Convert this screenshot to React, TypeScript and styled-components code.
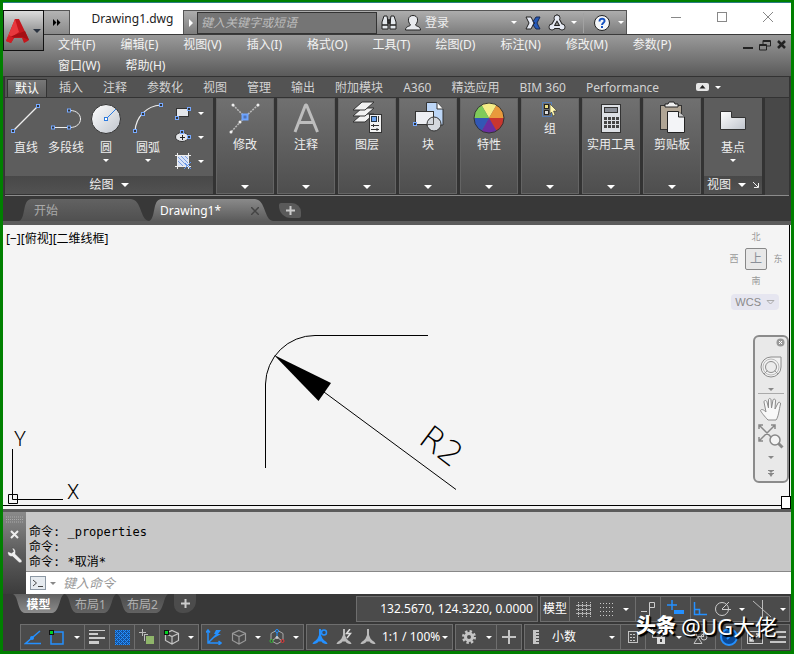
import React from 'react';
import styled, { createGlobalStyle, css } from 'styled-components';

const Global = createGlobalStyle`
  *, *::before, *::after { box-sizing: border-box; }
  html, body { margin: 0; padding: 0; background: #383838; }
  body, button, input, select {
    font-family: "Noto Sans", "Noto Sans CJK SC", sans-serif;
    font-size: 12px;
    line-height: 16px;
  }
  button, input, select {
    margin: 0; padding: 0; border: 0; background: none; color: inherit; border-radius: 0;
  }
  button, select { cursor: pointer; }
  svg { display: block; flex: none; }
`;

/* ---------- frame ---------- */
const Frame = styled.div`
  min-height: 100vh;
  display: flex;
  flex-direction: column;
  border: solid #008000;
  border-width: 2px 3px 3px;
  background: #383838;
  color: #eee;
  overflow: hidden;
`;

/* ---------- header ---------- */
const Header = styled.header`
  display: grid;
  grid-template-columns: 41px 1fr;
  grid-template-rows: 31px auto;
  border-top: 1px solid #2b7d86;
  background: linear-gradient(#fff 31px, #3a3a3a 31px, #3a3a3a 32px, #9a9a9a 32px, #7e7e7e 50px, #5a5a5a 100%);
`;
const AppButton = styled.button`
  grid-row: 1 / 3;
  margin-top: 7px;
  height: 41px;
  display: flex;
  align-items: center;
  justify-content: center;
  gap: 3px;
  border: 1px solid #111;
  background: linear-gradient(#dcdcdc, #9a9a9a 50%, #6b6b6b);
`;
const TitleRow = styled.div`
  display: flex;
  align-items: flex-end;
`;
const QuickAccess = styled.button`
  width: 26px;
  height: 24px;
  display: grid;
  place-items: center;
  border: solid #555;
  border-width: 1px 1px 0 0;
  background: linear-gradient(#b4b4b4, #8a8a8a);
`;
const Title = styled.h1`
  margin: 0;
  width: 113px;
  padding-left: 12px;
  align-self: center;
  text-align: center;
  font-size: 12px;
  font-weight: 400;
  line-height: 31px;
  height: 31px;
  color: #222;
`;
const InfoCenter = styled.div`
  height: 24px;
  display: flex;
  align-items: center;
  border: 1px solid #555;
  border-bottom: 0;
  background: linear-gradient(#adadad, #7c7c7c);
`;
const IconButton = styled.button<{ $w: number }>`
  width: ${p => p.$w}px;
  height: 100%;
  display: grid;
  place-items: center;
`;
const SearchInput = styled.input`
  width: 180px;
  height: 22px;
  padding-left: 3px;
  border: 1px solid #333;
  background: #757575;
  font-style: italic;
  &::placeholder { color: #bdbdbd; opacity: 1; }
`;
const SignIn = styled.button`
  width: 95px;
  height: 100%;
  display: flex;
  align-items: center;
  justify-content: space-between;
  padding-right: 3px;
`;
const Separator = styled.span`
  width: 1px;
  height: 20px;
  margin: 0 3px;
  background: #a2a2a2;
`;
const WindowButtons = styled.div`
  margin-left: auto;
  align-self: stretch;
  display: flex;
  color: #888;
`;
const WindowButton = styled.button`
  width: 46px;
  padding-bottom: 3px;
  display: grid;
  place-items: center;
`;
const MenuRow = styled.div`
  display: flex;
  justify-content: space-between;
`;
const MenuBar = styled.nav`
  display: flex;
  flex-wrap: wrap;
  column-gap: 25px;
  padding: 0 16px 0 14px;
  flex: 1;
`;
const MenuItem = styled.button`
  height: 21px;
  line-height: 21px;
  color: #f2f2f2;
`;
const DocControls = styled.div`
  display: flex;
  gap: 6px;
  height: 21px;
  align-items: center;
  padding-right: 5px;
  color: #222;
`;

/* ---------- ribbon ---------- */
const RibbonTabs = styled.nav`
  display: flex;
  height: 21px;
  margin: 0 1px;
  border: 1px solid #333;
  border-bottom: 0;
  background: #535353;
`;
const RibbonTab = styled.button<{ $active?: boolean }>`
  padding: 0 10px;
  line-height: 22px;
  color: #d2d2d2;
  ${p => p.$active && css`
    margin: 2px 2px 0 2px;
    padding: 0 7px;
    line-height: 17px;
    border: 1px solid #333;
    border-bottom: 0;
    background: linear-gradient(#777, #5e5e5e);
    color: #fff;
  `}
`;
const RibbonToggle = styled.button`
  display: flex;
  align-items: center;
  gap: 6px;
  padding-left: 27px;
`;
const Ribbon = styled.div`
  display: flex;
  gap: 3px;
  height: 99px;
  margin: 0 1px;
  padding: 0 0 2px;
  border: solid #333;
  border-width: 1px 1px 0;
  background: linear-gradient(90deg, #333 760px, #484848 760px);
  box-shadow: 0 -1px #8c8c8c inset;
`;
const Panel = styled.section<{ $w: number }>`
  width: ${p => p.$w}px;
  flex: none;
  display: flex;
  flex-direction: column;
  background: #5d5d5d;
`;
const PanelFooter = styled.button`
  height: 18px;
  margin-top: auto;
  display: flex;
  align-items: center;
  justify-content: center;
  gap: 7px;
  background: linear-gradient(#484848, #525252);
`;
const Tools = styled.div`
  display: grid;
  grid-template-columns: 42px 38px 42px 42px 1fr;
`;
const ToolButton = styled.button`
  height: 76px;
  padding-top: 4px;
  display: flex;
  flex-direction: column;
  align-items: center;
  white-space: nowrap;
  svg + span { margin-top: 6px; }
  span + svg { margin-top: 3px; }
`;
const SmallTools = styled.div`
  padding-top: 3px;
`;
const SmallTool = styled.button`
  height: 24px;
  display: flex;
  align-items: center;
  gap: 7px;
  padding-left: 6px;
`;
const CollapsedPanel = styled.button`
  width: 58px;
  flex: none;
  padding: 2px 0 4px;
  display: flex;
  flex-direction: column;
  align-items: center;
  white-space: nowrap;
  background: linear-gradient(#707070, #4e4e4e);
  border: 1px solid #646464;
  svg + span { margin-top: 2px; }
  svg:last-child { margin-top: auto; }
`;

/* ---------- drawing tabs ---------- */
const FileTabs = styled.nav`
  display: flex;
  align-items: flex-end;
  height: 29px;
  padding-left: 16px;
  border-bottom: 4px solid #5b5b5b;
  background: #383838;
`;
const FileTab = styled.button<{ $w: number; $active?: boolean }>`
  width: ${p => p.$w}px;
  height: 22px;
  display: flex;
  align-items: center;
  justify-content: space-between;
  padding: 2px 14px 0 ${p => (p.$active ? 11 : 15)}px;
  color: ${p => (p.$active ? '#fff' : '#aaa')};
  background: ${p => (p.$active ? 'linear-gradient(#8a8a8a, #5b5b5b)' : 'linear-gradient(#626262, #505050)')};
  clip-path: path('${p => `M0 22C7 20 3 1 12 0H${p.$w - 18}C${p.$w - 7} 1 ${p.$w - 9} 21 ${p.$w} 22Z`}');
`;
const AddTab = styled.button`
  width: 22px;
  height: 15px;
  margin: 0 0 3px 6px;
  display: grid;
  place-items: center;
  border-radius: 2px 9px 2px 12px;
  background: #5a5a5a;
`;

/* ---------- canvas ---------- */
const Canvas = styled.main`
  position: relative;
  flex: 1;
  min-height: 284px;
  background: #f4f4f4;
  color: #000;
`;
const ViewportBorder = styled.div`
  position: absolute;
  inset: 0 1px 3px 0;
  border: solid #000;
  border-width: 0 1px 1px 0;
`;
const ResizeCorner = styled.span`
  position: absolute;
  right: 0;
  bottom: 0;
  width: 10px;
  height: 13px;
  border: 1px solid #000;
  background: #fff;
`;
const ViewportLabel = styled.button`
  position: absolute;
  left: 3px;
  top: 6px;
`;
const Sketch = styled.svg`
  position: absolute;
  left: 0;
  top: 0;
`;
const Ucs = styled.svg`
  position: absolute;
  left: 0;
  bottom: 4px;
`;
const ViewCube = styled.div`
  position: absolute;
  right: 2px;
  top: 1px;
  display: grid;
  grid-template-columns: repeat(3, 22px);
  grid-auto-rows: 22px;
  place-items: center;
  font-size: 9px;
  line-height: 12px;
  color: #999;
`;
const CubeFace = styled.button`
  grid-column: 2;
  width: 22px;
  height: 22px;
  border: 1px solid #888;
  border-radius: 2px;
  background: #e8e8e8;
  color: #8a8f98;
`;
const CubeEdge = styled.span<{ $col: number }>`
  grid-column: ${p => p.$col};
`;
const Wcs = styled.button`
  position: absolute;
  right: 12px;
  top: 69px;
  display: flex;
  align-items: center;
  gap: 5px;
  padding: 0 4px;
  border-radius: 4px;
  background: #e6e6f0;
  color: #8a8a8a;
  font-family: "Liberation Sans", sans-serif;
  font-size: 11px;
`;
const NavBar = styled.div`
  position: absolute;
  right: 2px;
  top: 110px;
  width: 36px;
  height: 148px;
  display: flex;
  flex-direction: column;
  align-items: center;
  border: 2px solid #8b8b8b;
  border-radius: 6px;
  background: #e9e9e9;
`;
const NavButton = styled.button<{ $h: number }>`
  width: 100%;
  height: ${p => p.$h}px;
  display: grid;
  place-items: center;
`;
const NavClose = styled(NavButton)`
  justify-content: end;
  padding-right: 2px;
`;
const NavRule = styled.span`
  width: 26px;
  height: 1px;
  background: #aaa;
`;

/* ---------- command line ---------- */
const CommandPanel = styled.section`
  display: grid;
  grid-template-columns: 23px 1fr;
  border-top: 3px solid #5b5b5b;
`;
const Grip = styled.div`
  display: flex;
  flex-direction: column;
  align-items: center;
  gap: 7px;
  padding-top: 4px;
  background: linear-gradient(#8a8a8a, #5c5c5c 50%, #3c3c3c);
`;
const History = styled.pre`
  margin: 0;
  padding: 13px 3px 1px;
  font-family: "DejaVu Sans Mono", "Noto Sans CJK SC", monospace;
  font-size: 12px;
  line-height: 15px;
  height: 59px;
  color: #000;
  background: #c8c8c8;
`;
const CommandRow = styled.label`
  display: flex;
  align-items: center;
  gap: 4px;
  height: 23px;
  padding-left: 4px;
  border-top: 1px solid #888;
  background: #fff;
`;
const CommandInput = styled.input`
  flex: 1;
  padding-left: 3px;
  font-size: 13px;
  font-style: italic;
  color: #222;
  outline: 0;
  &::placeholder { color: #999; opacity: 1; }
`;

/* ---------- status bar ---------- */
const Bottom = styled.footer`
  background: #383838;
`;
const BottomRow = styled.div`
  display: flex;
  justify-content: space-between;
  align-items: flex-start;
  height: 30px;
  padding-right: 1px;
`;
const LayoutTabs = styled.nav`
  display: flex;
  gap: 1px;
  padding-left: 10px;
`;
const LayoutTab = styled.button<{ $active?: boolean }>`
  width: 51px;
  height: 19px;
  line-height: 21px;
  text-align: center;
  font-weight: ${p => (p.$active ? 700 : 400)};
  color: ${p => (p.$active ? '#fff' : '#b0b0b0')};
  background: ${p => (p.$active ? 'linear-gradient(#606060, #8c8c8c)' : 'linear-gradient(#4c4c4c, #626262)')};
  clip-path: path('M0 0H51C46 3 47 18 39 19H12C4 18 6 3 0 0Z');
`;
const AddLayout = styled(AddTab)`
  height: 19px;
  margin: 0 0 0 5px;
  border-radius: 0 0 12px 8px;
  background: #4c4c4c;
`;
const StatusGroups = styled.div`
  display: flex;
  gap: 2px;
  padding-top: 2px;
`;
const StatusRow = styled.div`
  display: flex;
  gap: 2px;
  padding: 0 1px 1px 17px;
`;
const Group = styled.div<{ $w: number; $grow?: boolean }>`
  width: ${p => p.$w}px;
  flex: ${p => (p.$grow ? '1 0 auto' : 'none')};
  height: 26px;
  display: flex;
  border: 1px solid #6e6e6e;
  background: #4b4b4b;
`;
const Cell = styled.button<{ $w: number; $rule?: boolean }>`
  width: ${p => p.$w}px;
  flex: none;
  display: grid;
  place-items: center;
  color: #c4c4c4;
  border-right: ${p => (p.$rule ? '1px solid #6e6e6e' : '0')};
`;
const TextCell = styled(Cell)`
  color: #fff;
`;
const Spacer = styled.span`
  width: 6px;
  border-right: 1px solid #6e6e6e;
`;
const Coordinates = styled.output`
  flex: 1;
  padding-right: 4px;
  text-align: right;
  line-height: 24px;
  color: #fff;
`;
const StatusSelect = styled.select<{ $w: number; $pad?: number }>`
  width: ${p => p.$w}px;
  padding-left: ${p => p.$pad || 0}px;
  height: 24px;
  appearance: none;
  color: #fff;
  outline: 0;
  option { color: #000; }
`;
const SelectWrap = styled.label`
  display: flex;
  align-items: center;
`;
const Watermark = styled.div`
  position: absolute;
  right: 17px;
  bottom: 12px;
  display: flex;
  align-items: center;
  gap: 5px;
  height: 32px;
  font-size: 22px;
  line-height: 32px;
  color: #fff;
  text-shadow: 1px 1px 1px #000, 2px 2px 1px #000;
  pointer-events: none;
  b { font-size: 20px; font-weight: 900; }
`;

/* ---------- icons ---------- */
type IconProps = { w?: number; h?: number; children: React.ReactNode };
const Icon = ({ w = 16, h = w, children }: IconProps) => (
  <svg width={w} height={h} viewBox={`0 0 ${w} ${h}`} fill="none" aria-hidden="true">{children}</svg>
);
const Caret = ({ w = 8, color = '#fff' }: { w?: number; color?: string }) => (
  <svg width={w} height={w / 2} viewBox="0 0 8 4" aria-hidden="true"><path d="M0 0H8L4 4Z" fill={color} /></svg>
);
const Plus = () => <Icon w={9}><path d="M4.5 0V9M0 4.5H9" stroke="#ccc" strokeWidth="2" /></Icon>;
const Node = ({ x, y }: { x: number; y: number }) => (
  <rect x={x - 1.5} y={y - 1.5} width="3" height="3" fill="#333" stroke="#76a9ff" />
);
const B = '#2490ff';

const Metal = () => (
  <linearGradient id="metal" x1="0" y1="0" x2="1" y2="1"><stop stopColor="#fff" /><stop offset="1" stopColor="#bfc4cc" /></linearGradient>
);

const LineIcon = () => <Icon w={32}><path d="M3 29L28 4" stroke="#eee" strokeWidth="1.2" /><Node x={3} y={29} /><Node x={28} y={4} /></Icon>;
const PolylineIcon = () => <Icon w={32}><path d="M3 25.500H20C34 25.500 34 8.500 20 8.500" stroke="#eee" /><Node x={3} y={25.5} /><Node x={19} y={25.5} /><Node x={19} y={8.5} /></Icon>;
const CircleIcon = () => (
  <Icon w={32}><defs><Metal /></defs><circle cx="16" cy="17" r="14.5" fill="url(#metal)" stroke="#333" /><path d="M16 17L26 7" stroke="#2c7be0" /><rect x="14.5" y="15.5" width="3" height="3" fill="#fff" stroke="#2c7be0" /></Icon>
);
const ArcIcon = () => <Icon w={32}><path d="M3 29C4 15 14 4 29 3" stroke="#eee" strokeWidth="1.200" /><Node x={3} y={29} /><Node x={11} y={12} /><Node x={29} y={3} /></Icon>;
const RectIcon = () => <Icon><rect x="1.5" y="3.5" width="12" height="8" fill="#e4e6ea" stroke="#333" /><Node x={2} y={13} /><Node x={14} y={4} /></Icon>;
const EllipseIcon = () => <Icon><ellipse cx="7" cy="8" rx="6.5" ry="4.5" fill="#e4e6ea" stroke="#333" /><path d="M7.500 6V11M5 8.500H10" stroke="#222" /><Node x={7} y={3} /><Node x={14} y={8} /></Icon>;
const HatchIcon = () => (
  <Icon><rect x="3" y="3" width="10" height="10" fill="#d8e3f8" /><path d="M3 8L8 13M3 4L12 13M6 3L13 10M10 3L13 6" stroke="#7c9fe0" /><path d="M2.5 0V16M13.5 0V16M0 2.5H16M0 13.5H16" stroke="#eee" /><path d="M9 16L16 9M10 10L16 16" stroke="#5c95f5" /></Icon>
);
const ModifyIcon = () => (
  <Icon w={34}><path d="M5 4L17 16L30 4M17 16L3 31" stroke="#bbb" strokeWidth="1.5" strokeDasharray="2 1" /><g fill="#eee"><circle cx="5" cy="4" r="1.5" /><circle cx="30" cy="4" r="1.5" /><circle cx="3" cy="31" r="1.5" /><circle cx="12" cy="21" r="1.5" /></g><rect x="14.5" y="13.5" width="5" height="5" fill="#4f74b8" stroke="#6ea4ff" strokeWidth="2" /></Icon>
);
const AnnotateIcon = () => <Icon w={34}><path d="M6 31L16.500 4H17.500L28.500 31M10 21.500H24" stroke="#bdbdbd" strokeWidth="3" strokeLinejoin="bevel" /></Icon>;
const LayersIcon = () => (
  <Icon w={34}><g fill="#f2f2f2" stroke="#333"><path d="M3 21L12 13H24L15 21Z" /><path d="M3 15L12 7H24L15 15Z" /><path d="M3 9L12 1H24L15 9Z" /><rect x="19.5" y="13.5" width="12" height="18" /></g><rect x="21.5" y="15.5" width="5" height="5" fill="#6da4ef" stroke="#234" /><path d="M28.500 15V21M21 24.500H29M21 28.500H29M23.500 23V26M27 27V30" stroke="#333" /></Icon>
);
const BlockIcon = () => (
  <Icon w={34}><path d="M15.5 1.5H26L32 8V24H15.500Z" fill="#bcd6f7" stroke="#333" /><path d="M26 1.500V8H32" fill="#fff" stroke="#333" /><rect x="4.5" y="10.5" width="18" height="13" fill="#eceef2" stroke="#333" /><circle cx="23" cy="23" r="7" fill="#d4d8de" stroke="#333" /><path d="M22.500 16V23.500H16" stroke="#555" /><Node x={4} y={23} /></Icon>
);
const wheel = ['#f5ec86', '#e99a3c', '#c9362e', '#6a2da0', '#3257b5', '#7fca5a'];
const ColorWheel = () => (
  <Icon w={34}>
    {wheel.map((c, i) => {
      const a = ((i * 60 - 120) * Math.PI) / 180;
      const b = a + Math.PI / 3;
      return <path key={c} fill={c} d={`M17 17L${17 + 15 * Math.cos(a)} ${17 + 15 * Math.sin(a)}A15 15 0 0 1 ${17 + 15 * Math.cos(b)} ${17 + 15 * Math.sin(b)}Z`} />;
    })}
    <circle cx="17" cy="17" r="15" stroke="#333" />
  </Icon>
);
const GroupIcon = () => (
  <Icon w={18}><rect x="1.5" y="1.5" width="9" height="14" stroke="#3e8cff" strokeDasharray="1 1" /><rect x="3.5" y="3.5" width="4" height="4" fill="#eedf83" stroke="#222" /><rect x="3.5" y="9.5" width="4" height="4" fill="#ddd" stroke="#222" /><path d="M9 3L16 10L12.5 10L14 14L12 15L10.5 11L9 13Z" fill="#fff8b0" stroke="#222" strokeWidth=".5" /></Icon>
);
const CalculatorIcon = () => (
  <Icon w={34}><rect x="7.5" y="3.5" width="19" height="28" fill="#dde0e5" stroke="#333" /><rect x="10.5" y="6.5" width="13" height="5" fill="#8b8f98" stroke="#333" />{[16, 20, 24].map(y => <path key={y} d={`M10 ${y + 1.5}H25`} stroke="#444" strokeWidth="3" strokeDasharray="3 1" />)}</Icon>
);
const ClipboardIcon = () => (
  <Icon w={34}><rect x="5.5" y="4.5" width="21" height="24" fill="#b0a595" stroke="#333" /><path d="M10 6V3H13L14 1H19L20 3H23V6Z" fill="#eee" stroke="#222" /><path d="M12.500 10.500H23.500L29.500 16V31.500H12.500Z" fill="#f3f4f7" stroke="#222" /><path d="M23.500 10.500V16H29.500" fill="#ccc" stroke="#222" /></Icon>
);
const BaseIcon = () => <Icon w={32}><defs><Metal /></defs><path d="M3.500 9.500H14.500V15.500H28.500V27.500H3.500Z" fill="url(#metal)" stroke="#333" /></Icon>;

const LogoIcon = () => (
  <Icon w={24} h={28}><path d="M9 2H13L23 23C22 24 20 25 18 26L16 21H8L5 26L0 24Z" fill="#c4161c" /><path d="M9 2L13 15L0 24Z" fill="#e8383d" /><path d="M1 21L19 14L23 23L16 20Z" fill="#a50f14" /><path d="M0 24L3 18L8 21L5 26Z" fill="#d01d24" /></Icon>
);
const Binoculars = () => (
  <Icon w={18}><g fill="#e4e8ec" stroke="#222"><path d="M2 15V8L4 2H7L8 8V15Z" /><path d="M10 15V8L11 2H14L16 8V15Z" /></g><path d="M8 6H10V9H8ZM2 11H8M10 11H16" stroke="#222" strokeWidth="1.5" /></Icon>
);
const UserIcon = () => <Icon w={18}><path d="M1.5 16C1.5 12 6 12.5 6.5 11C3 7 4 1.500 9 1.500S15 7 11.5 11C12 12.5 16.5 12 16.5 16Z" fill="#e8eaee" stroke="#222" /></Icon>;
const ExchangeIcon = () => (
  <Icon w={16}><path d="M1 2H6L9 8L6 14H1L4 8Z" fill="#e6eaf4" stroke="#222" /><path d="M15 2H11L8 6.5L10 8L8 10L11 14H15L12 8Z" fill="#2458b8" stroke="#1a2a50" /></Icon>
);
const A360Icon = () => <Icon w={18}><g stroke="#222" fill="#222"><path d="M9 4L4 13H14Z" strokeWidth="4" fill="none" /><circle cx="9" cy="4" r="3" /><circle cx="4" cy="13" r="3" /><circle cx="14" cy="13" r="3" /></g><g fill="#e6eaf4"><path d="M9 4L4 13H14Z" stroke="#e6eaf4" strokeWidth="2" fill="none" /><circle cx="9" cy="4" r="2.5" /><circle cx="4" cy="13" r="2.5" /><circle cx="14" cy="13" r="2.5" /></g></Icon>;
const HelpIcon = () => <Icon w={18}><circle cx="9" cy="9" r="7.5" fill="#f4f6f8" stroke="#222" /><path d="M6.500 7.500C6.500 3.500 12 4 11.500 7.200C11 9 9 9 9 11M9 12V14" stroke="#1450c0" strokeWidth="2" /></Icon>;
const WrenchIcon = () => (
  <Icon w={18}><path d="M6 2L7.500 5.500L5.500 7L2 5.500C1 8 3 11 6.500 10.500L13 16.500C14.500 17.500 17 16 15.500 14L9.500 8C10 4.500 9 2 6 2Z" fill="#eee" stroke="#444" strokeWidth=".5" /></Icon>
);

const CubeOutline = ({ c = '#c4c4c4' }: { c?: string }) => <path d="M8 1.500L14.500 4.500V11.500L8 15L1.500 11.500V4.500ZM1.500 4.500L8 7.500L14.500 4.500M8 7.500V15" stroke={c} strokeWidth="1.200" />;
const compassBody = 'M7 0H9V6L10.500 9.500C12 12 15 12.500 15.500 15C13 15 10.500 14.500 9.500 12.500H6.500C5.500 14.500 3 15 .5 15C1 12.500 4 12 5.500 9.500L7 6Z';

const menus = ['文件(F)', '编辑(E)', '视图(V)', '插入(I)', '格式(O)', '工具(T)', '绘图(D)', '标注(N)', '修改(M)', '参数(P)', '窗口(W)', '帮助(H)'];
const tabs = ['默认', '插入', '注释', '参数化', '视图', '管理', '输出', '附加模块', 'A360', '精选应用', 'BIM 360', 'Performance'];
const drawTools = [
  { name: '直线', icon: <LineIcon /> },
  { name: '多段线', icon: <PolylineIcon /> },
  { name: '圆', icon: <CircleIcon />, menu: true },
  { name: '圆弧', icon: <ArcIcon />, menu: true },
];
const smallTools = [
  { name: '矩形', icon: <RectIcon /> },
  { name: '椭圆', icon: <EllipseIcon /> },
  { name: '图案填充', icon: <HatchIcon /> },
];
const panels = [
  { name: '修改', icon: <ModifyIcon /> },
  { name: '注释', icon: <AnnotateIcon /> },
  { name: '图层', icon: <LayersIcon /> },
  { name: '块', icon: <BlockIcon /> },
  { name: '特性', icon: <ColorWheel /> },
  { name: '组', icon: <GroupIcon /> },
  { name: '实用工具', icon: <CalculatorIcon /> },
  { name: '剪贴板', icon: <ClipboardIcon /> },
];

const AppHeader = () => (
  <Header>
    <AppButton aria-label="应用程序菜单"><LogoIcon /><Caret color="#2a3340" w={8} /></AppButton>
    <TitleRow>
      <QuickAccess aria-label="快速访问"><Icon w={8} h={7}><path d="M0 0L3.5 3.5L0 7ZM4 0L7.5 3.5L4 7Z" fill="#000" /></Icon></QuickAccess>
      <Title>Drawing1.dwg</Title>
      <InfoCenter>
        <IconButton $w={13} aria-label="折叠搜索"><Icon w={4} h={8}><path d="M0 0L4 4L0 8Z" fill="#fff" /></Icon></IconButton>
        <SearchInput aria-label="搜索" placeholder="键入关键字或短语" />
        <IconButton $w={24} aria-label="查找"><Binoculars /></IconButton>
        <IconButton $w={24} aria-label="账户"><UserIcon /></IconButton>
        <SignIn>登录<Caret w={6} /></SignIn>
        <IconButton $w={26} aria-label="Exchange"><ExchangeIcon /></IconButton>
        <IconButton $w={22} aria-label="A360"><A360Icon /></IconButton>
        <IconButton $w={12} aria-label="A360 菜单"><Caret w={6} /></IconButton>
        <Separator />
        <IconButton $w={29} aria-label="帮助"><HelpIcon /></IconButton>
        <IconButton $w={10} aria-label="帮助菜单"><Caret w={6} /></IconButton>
      </InfoCenter>
      <WindowButtons>
        <WindowButton aria-label="最小化"><Icon w={10}><path d="M0 5.5H10" stroke="currentColor" /></Icon></WindowButton>
        <WindowButton aria-label="最大化"><Icon w={10}><rect x=".5" y=".5" width="9" height="9" stroke="currentColor" /></Icon></WindowButton>
        <WindowButton aria-label="关闭"><Icon w={10}><path d="M0 0L10 10M10 0L0 10" stroke="currentColor" /></Icon></WindowButton>
      </WindowButtons>
    </TitleRow>
    <MenuRow>
      <MenuBar>{menus.map(m => <MenuItem key={m}>{m}</MenuItem>)}</MenuBar>
      <DocControls>
        <button aria-label="最小化图形"><Icon w={10} h={12}><path d="M0 9H10" stroke="currentColor" strokeWidth="2" /></Icon></button>
        <button aria-label="还原图形"><Icon w={12} h={12}><path d="M4 5V1.5H11.5V7H8M4 2.5H11M.5 5.5H7.5V11H.5ZM.5 6.5H7" stroke="currentColor" /></Icon></button>
        <button aria-label="关闭图形"><Icon w={9} h={9}><path d="M1 1L8 8M8 1L1 8" stroke="currentColor" strokeWidth="2.5" /></Icon></button>
      </DocControls>
    </MenuRow>
  </Header>
);

const RibbonArea = () => (
  <>
    <RibbonTabs>
      {tabs.map((t, i) => <RibbonTab key={t} $active={i === 0}>{t}</RibbonTab>)}
      <RibbonToggle aria-label="最小化功能区">
        <Icon w={13} h={8}><rect width="13" height="8" rx="2" fill="#e6e6e6" /><path d="M3.5 5.5L6.5 2L9.5 5.5Z" fill="#222" /></Icon>
        <Caret w={6} />
      </RibbonToggle>
    </RibbonTabs>
    <Ribbon>
      <Panel $w={208}>
        <Tools>
          {drawTools.map(t => <ToolButton key={t.name}>{t.icon}<span>{t.name}</span>{t.menu && <Caret w={6} />}</ToolButton>)}
          <SmallTools>
            {smallTools.map(t => <SmallTool key={t.name} aria-label={t.name}>{t.icon}<Caret w={6} /></SmallTool>)}
          </SmallTools>
        </Tools>
        <PanelFooter>绘图<Caret /></PanelFooter>
      </Panel>
      {panels.map(p => <CollapsedPanel key={p.name}>{p.icon}<span>{p.name}</span><Caret /></CollapsedPanel>)}
      <Panel $w={58}>
        <ToolButton><BaseIcon /><span>基点</span><Caret w={6} /></ToolButton>
        <PanelFooter>视图<Caret /><Icon w={6}><path d="M0 0L5 5M5.5 1V5.5H1" stroke="#eee" /></Icon></PanelFooter>
      </Panel>
    </Ribbon>
  </>
);

const DrawingArea = () => (
  <Canvas>
    <Sketch width="480" height="280" viewBox="3 225 480 280" fill="none" stroke="#000">
      <path d="M428 335.5H315A49.5 49.5 0 0 0 265.5 384V468M324 392L456 489.5" />
      <path d="M274 355L331 383L318.5 401Z" fill="#000" stroke="none" />
      <text transform="translate(417 442) rotate(37)" fontFamily="'DejaVu Sans Light', 'DejaVu Sans'" fontWeight="200" fontSize="33" fill="#000" stroke="none">R2</text>
    </Sketch>
    <Ucs width="90" height="80" viewBox="3 425 90 80" fill="none" stroke="#000">
      <path d="M12.5 449V499.5H63M8.5 494.5H17.5V503.5H8.5Z" />
      <g fontFamily="Roboto, sans-serif" fontWeight="300" fontSize="20" fill="#000" stroke="none">
        <text x="14" y="446">Y</text>
        <text x="67" y="499">X</text>
      </g>
    </Ucs>
    <ViewportBorder />
    <ViewportLabel>[−][俯视][二维线框]</ViewportLabel>
    <ViewCube>
      <CubeEdge $col={2}>北</CubeEdge>
      <CubeEdge $col={1}>西</CubeEdge>
      <CubeFace>上</CubeFace>
      <CubeEdge $col={3}>东</CubeEdge>
      <CubeEdge $col={2}>南</CubeEdge>
    </ViewCube>
    <Wcs>WCS<Icon w={9} h={5}><path d="M1 .5H8L4.5 4Z" stroke="#aaa" /></Icon></Wcs>
    <NavBar>
      <NavClose $h={11} aria-label="关闭导航栏"><Icon w={9}><circle cx="4.5" cy="4.5" r="4" fill="#999" /><path d="M3 3L6 6M6 3L3 6" stroke="#fff" /></Icon></NavClose>
      <NavButton $h={37} aria-label="控制盘"><Icon w={22}><path d="M11 1H21V11A10 10 0 1 1 11 1Z" fill="#f2f2f2" stroke="#8c8c8c" /><circle cx="11" cy="11" r="8" stroke="#bbb" /><circle cx="11" cy="11" r="5.5" fill="#ececec" stroke="#8c8c8c" /><path d="M4 18L7.500 14.500M18 18L14.500 14.500" stroke="#999" /></Icon></NavButton>
      <NavButton $h={8} aria-label="控制盘菜单"><Caret w={6} color="#888" /></NavButton>
      <NavRule />
      <NavButton $h={30} aria-label="平移"><Icon w={24}><path d="M9 23C6 20 2 15 1.5 13.5C2.5 11.5 5 13 7 15L5 5C5 3 7.5 3 8 5L9.5 11V3C9.5 1 12 1 12 3L12.5 11L14 3C14.5 1.500 17 2 16.5 4L16 12L19 6C20 4.5 22 5.5 21.5 7C20 13 19.5 20 17 23Z" fill="#f8f8f8" stroke="#8c8c8c" /></Icon></NavButton>
      <NavButton $h={26} aria-label="缩放"><Icon w={26}><path d="M1 5V1H5M13 1H17V5M1 13V17H5M1 1L17 17M17 1L1 17" stroke="#888" strokeWidth="1.5" /><circle cx="17" cy="16" r="5" fill="#f4f4f4" stroke="#888" strokeWidth="1.5" /><path d="M20.5 19.5L24.5 23.5" stroke="#888" strokeWidth="3" /></Icon></NavButton>
      <NavButton $h={15} aria-label="缩放菜单"><Caret w={6} color="#888" /></NavButton>
      <NavButton $h={16} aria-label="自定义"><Icon w={6} h={7}><path d="M0 .5H6M0 3.5H6" stroke="#888" /><path d="M1 1H5L3 3ZM1 4H5L3 7Z" fill="#888" /></Icon></NavButton>
    </NavBar>
    <ResizeCorner />
  </Canvas>
);

const CommandArea = () => (
  <CommandPanel>
    <Grip>
      <Icon w={18} h={7}><path d="M0 1H18M0 3.5H18M0 6H18" stroke="#aaa" strokeDasharray="1 1" /></Icon>
      <button aria-label="关闭命令行"><Icon w={9}><path d="M1 1L8 8M8 1L1 8" stroke="#eee" strokeWidth="2" /></Icon></button>
      <button aria-label="自定义命令行"><WrenchIcon /></button>
    </Grip>
    <div>
      <History>{'命令: _properties\n命令:\n命令: *取消*'}</History>
      <CommandRow>
        <Icon w={16} h={14}><rect x=".5" y=".5" width="15" height="13" fill="#e6ebf0" stroke="#8c98a4" /><path d="M3 4L6.5 7L3 10M8 10.5H13" stroke="#444" /></Icon>
        <Caret w={6} color="#888" />
        <CommandInput aria-label="命令" placeholder="键入命令" />
      </CommandRow>
    </div>
  </CommandPanel>
);

const StatusArea = () => (
  <Bottom>
    <BottomRow>
      <LayoutTabs>
        <LayoutTab $active>模型</LayoutTab>
        <LayoutTab>布局1</LayoutTab>
        <LayoutTab>布局2</LayoutTab>
        <AddLayout aria-label="新建布局"><Plus /></AddLayout>
      </LayoutTabs>
      <StatusGroups>
        <Group $w={182}><Coordinates>132.5670, 124.3220, 0.0000</Coordinates></Group>
        <Group $w={250}>
          <TextCell $w={29} $rule>模型</TextCell>
          <Cell $w={26} aria-label="栅格"><Icon w={15}><path d="M2.5 0V15M6.5 0V15M10.5 0V15M14.5 0V15" stroke="#c4c4c4" strokeDasharray="1 1" /><path d="M0 3.5H15M0 7.5H15M0 11.5H15" stroke="#aaa" /></Icon></Cell>
          <Cell $w={21} aria-label="捕捉"><Icon w={14}><path d="M0 1.500H14M0 5.500H14M0 9.500H14M0 13.500H14" stroke="#ccc" strokeDasharray="1 2" /></Icon></Cell>
          <Cell $w={19} $rule aria-label="捕捉菜单"><Caret w={6} /></Cell>
          <Cell $w={25} $rule aria-label="推断约束"><Icon><path d="M9.500 15V1.500H14.500V6.500H9.500M1 10.500H7" stroke="#ccc" /></Icon></Cell>
          <Cell $w={30} $rule aria-label="动态输入"><Icon w={18}><path d="M5 0V10M0 5H10" stroke={B} strokeWidth="1.500" /><rect x="7" y="10" width="10" height="4" fill={B} /></Icon></Cell>
          <Cell $w={18} aria-label="正交"><Icon w={14}><path d="M1.5 0V12.5H14M1.5 7.5H6.5V12" stroke={B} strokeWidth="1.5" /></Icon></Cell>
          <Cell $w={28} aria-label="极轴"><Icon><circle cx="7" cy="8" r="6.5" stroke="#ccc" /><path d="M7 8L14 1M7 8.500H16" stroke="#ccc" /></Icon></Cell>
          <Cell $w={10} aria-label="极轴菜单"><Caret w={6} /></Cell>
          <Cell $w={30} aria-label="等轴测"><Icon w={18}><path d="M0 1L18 17M9.500 0V18" stroke="#bbb" /></Icon></Cell>
          <Cell $w={11} aria-label="等轴测菜单"><Caret w={6} /></Cell>
        </Group>
      </StatusGroups>
    </BottomRow>
    <StatusRow>
      <Group $w={179}>
        <Cell $w={24} aria-label="对象捕捉追踪"><Icon w={18}><path d="M16 3L1.5 15.5H17" stroke={B} strokeWidth="1.5" /><circle cx="8" cy="10" r="2" fill={B} /></Icon></Cell>
        <Cell $w={24} aria-label="对象捕捉"><Icon><rect x="2" y="3" width="12" height="12" stroke={B} strokeWidth="1.5" /><rect x=".5" y="1.5" width="4" height="4" fill="#00d020" stroke="#111" /></Icon></Cell>
        <Cell $w={16} $rule aria-label="对象捕捉菜单"><Caret w={6} /></Cell>
        <Cell $w={25} $rule aria-label="线宽"><Icon><path d="M0 1.500H16" stroke="#ccc" /><path d="M0 5H9M0 9H16" stroke="#ccc" strokeWidth="2" /><path d="M0 13.500H10" stroke="#ccc" strokeWidth="3" /></Icon></Cell>
        <Cell $w={25} $rule aria-label="透明度"><Icon w={15}><rect width="15" height="15" fill="#1554a0" /><path d="M0 3L3 0M0 7L7 0M0 11L11 0M0 15L15 0M4 15L15 4M8 15L15 8M12 15L15 12M0 12L3 15M0 8L7 15M0 4L11 15M0 0L15 15M4 0L15 11M8 0L15 7M12 0L15 3" stroke={B} /></Icon></Cell>
        <Cell $w={25} $rule aria-label="选择循环"><Icon><path d="M3.500 0V7M0 3.500H7M5.500 5V12M5 5.500H9" stroke="#bbb" /><rect x="7" y="7" width="8" height="8" fill="#8fb56a" /></Icon></Cell>
        <Cell $w={24} aria-label="三维对象捕捉"><Icon><CubeOutline /><rect x=".5" y="1.5" width="4" height="4" fill="#00d020" stroke="#111" /></Icon></Cell>
        <Cell $w={14} aria-label="三维对象捕捉菜单"><Caret w={6} /></Cell>
      </Group>
      <Group $w={103}>
        <Cell $w={24} aria-label="动态 UCS"><Icon><path d="M2 1V14H15M2 14L11 5M0 3.5L2 1L4 3.5M12.5 12L15 14L12.5 16" stroke={B} strokeWidth="1.5" /><path d="M10 1H15L12 5H15L8 9L10 5H8Z" fill={B} /></Icon></Cell>
        <Cell $w={25} aria-label="选择过滤"><Icon><CubeOutline c="#999" /></Icon></Cell>
        <Cell $w={14} aria-label="选择过滤菜单"><Caret w={6} /></Cell>
        <Cell $w={24} aria-label="小控件"><Icon><path d="M8 1L14 4.5V11.5L8 15L2 11.5V4.5Z" stroke="#aaa" /><path d="M8 8V3" stroke={B} /><path d="M8 8L13 12" stroke="#bbb" /><path d="M8 8L3 12" stroke="#bbb" /><circle cx="8" cy="8.500" r="1" stroke="#ddd" /><g fill="#444"><circle cx="8" cy="2" r="1.5" stroke={B} /><circle cx="13.5" cy="12" r="1.5" stroke="#e33" /><circle cx="2.5" cy="12" r="1.5" stroke="#3b3" /></g></Icon></Cell>
        <Cell $w={14} aria-label="小控件菜单"><Caret w={6} /></Cell>
      </Group>
      <Group $w={147}>
        <Cell $w={25} aria-label="注释可见性"><Icon><path d={compassBody} fill={B} /><circle cx="12" cy="3.5" r="2.5" fill="#3c4a5c" stroke={B} strokeWidth="1.5" /></Icon></Cell>
        <Cell $w={24} aria-label="自动缩放"><Icon><path d={compassBody} fill="#bbb" /><path d="M14 0L10.500 4.500H14.500L11 9" stroke="#ddd" strokeWidth="1.5" /></Icon></Cell>
        <Cell $w={24} aria-label="注释比例"><Icon><path d={compassBody} fill="#bbb" /></Icon></Cell>
        <SelectWrap>
          <StatusSelect $w={62} $pad={2} aria-label="比例" defaultValue="1"><option value="1">1:1 / 100%</option></StatusSelect>
          <Caret w={6} />
        </SelectWrap>
      </Group>
      <Group $w={67}>
        <Cell $w={26} aria-label="切换工作空间"><Icon w={14}><circle cx="7" cy="7" r="5.5" stroke="#c4c4c4" strokeWidth="3" strokeDasharray="2.3 2" /><circle cx="7" cy="7" r="3.5" stroke="#c4c4c4" strokeWidth="3" /></Icon></Cell>
        <Cell $w={15} $rule aria-label="工作空间菜单"><Caret w={6} /></Cell>
        <Cell $w={24} aria-label="注释监视器"><Icon w={14}><path d="M7 0V14M0 7H14" stroke="#c4c4c4" strokeWidth="2" /></Icon></Cell>
      </Group>
      <Group $w={265} $grow>
        <Cell $w={22} aria-label="单位"><Icon w={6} h={14}><path d="M0 0H6V2H3V3H6V5H3V6H6V8H3V9H6V11H3V12H6V14H0Z" fill="#c4c4c4" /></Icon></Cell>
        <SelectWrap>
          <StatusSelect $w={62} $pad={5} aria-label="单位格式" defaultValue="d"><option value="d">小数</option></StatusSelect>
          <Caret w={6} />
        </SelectWrap>
        <Spacer />
        <Cell $w={25} $rule aria-label="快捷特性"><Icon w={10} h={12}><rect x=".5" y=".5" width="9" height="11" stroke="#c4c4c4" /><path d="M2 3.5H8M2 6.5H8M2 9.5H8" stroke="#c4c4c4" strokeDasharray="2 1" /></Icon></Cell>
        <Cell $w={26} aria-label="锁定"><Icon><path d="M1.500 0V8.500H7M1 2.500H5" stroke="#c4c4c4" /><rect x="6" y="8" width="8" height="7" fill="#ddd" /><path d="M10.500 8V5.500H14.500V8" stroke="#ddd" strokeWidth="1.5" /><path d="M10 10V13" stroke="#444" strokeWidth="2" /></Icon></Cell>
        <Cell $w={14} aria-label="锁定菜单"><Caret w={6} /></Cell>
        <Cell $w={30} $rule aria-label="隔离对象"><Icon><rect x="3.5" y="2.5" width="7" height="5" stroke="#c4c4c4" /><circle cx="11" cy="8" r="3" stroke="#c4c4c4" /><path d="M1 14.500L5 8L9 14.500Z" stroke="#c4c4c4" /></Icon></Cell>
        <Cell $w={26} $rule aria-label="硬件加速"><Icon w={18}><circle cx="9" cy="9" r="8" fill="#0c4a96" stroke={B} strokeWidth="2" /><path d="M7 11L12 6" stroke={B} strokeWidth="2" /></Icon></Cell>
        <Cell $w={25} aria-label="全屏显示"><Icon><rect x=".5" y="2.5" width="15" height="12" stroke="#ccc" /><path d="M9 5H13V9M13 5L9 8M3 8V12H7M3 12L7 9" stroke="#ddd" strokeWidth="1.5" /></Icon></Cell>
        <Cell $w={22} aria-label="自定义"><Icon><path d="M0 3H16M0 8H16M0 13H16" stroke="#c4c4c4" strokeWidth="2" /></Icon></Cell>
      </Group>
    </StatusRow>
  </Bottom>
);

const Page = styled.div`
  position: relative;
`;

export default function App() {
  return (
    <Page>
      <Global />
      <Frame>
        <AppHeader />
        <RibbonArea />
        <FileTabs>
          <FileTab $w={130}>开始</FileTab>
          <FileTab $w={124} $active>
            Drawing1*
            <Icon w={8}><path d="M0 0L8 8M8 0L0 8" stroke="#444" strokeWidth="1.5" /></Icon>
          </FileTab>
          <AddTab aria-label="新建图形"><Plus /></AddTab>
        </FileTabs>
        <DrawingArea />
        <CommandArea />
        <StatusArea />
      </Frame>
      <Watermark><b>头条</b><span>@UG大佬</span></Watermark>
    </Page>
  );
}
